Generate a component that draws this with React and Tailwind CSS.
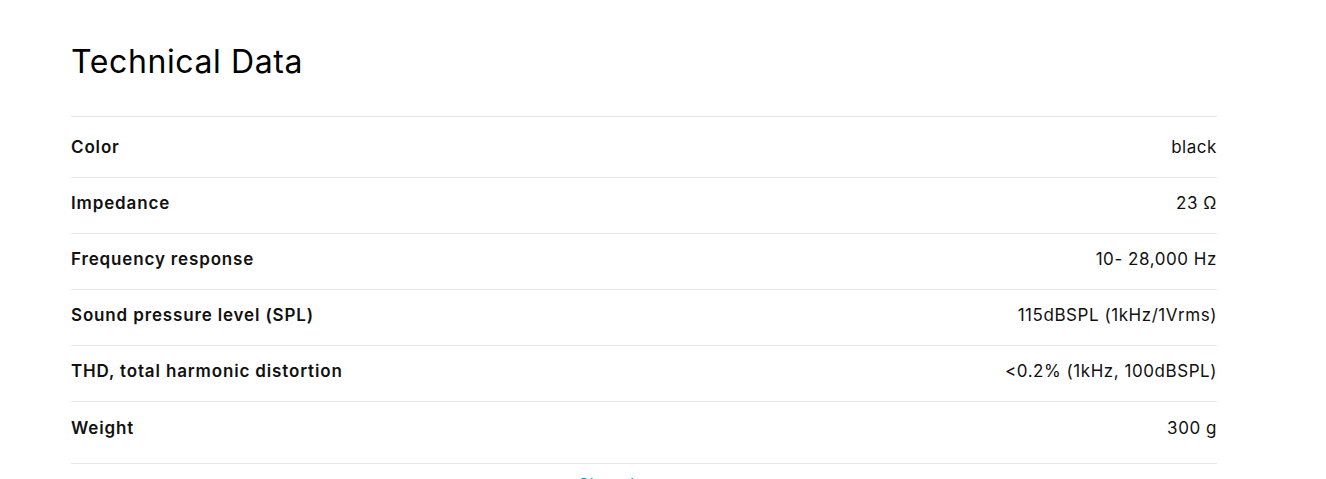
import React from 'react';

const specs = [
  { label: 'Color', value: 'black' },
  { label: 'Impedance', value: '23 Ω' },
  { label: 'Frequency response', value: '10- 28,000 Hz' },
  { label: 'Sound pressure level (SPL)', value: '115dBSPL (1kHz/1Vrms)' },
  { label: 'THD, total harmonic distortion', value: '<0.2% (1kHz, 100dBSPL)' },
  { label: 'Weight', value: '300 g' }
];

const App = () => {
  return (
    <div className="min-h-screen bg-white font-['Inter',sans-serif] text-[#111] overflow-hidden">
      <div className="w-[1146px] ml-[71px] pt-[43px]">
        {/* Heading */}
        <h2 className="text-[32px] leading-[38px] font-normal tracking-[0.6px] text-black">Technical Data</h2>

        {/* Spec table */}
        <div className="mt-[35px] border-t border-b border-[#e6e6e6] py-[5px]">
          {specs.map((row, i) => (
            <div
              key={row.label}
              className={`flex items-center justify-between h-[56px] pb-[3px] text-[17px] ${
                i < specs.length - 1 ? 'border-b border-[#e6e6e6]' : ''
              }`}
            >
              <span className="font-semibold tracking-[0.85px]">{row.label}</span>
              <span className="font-normal tracking-[0.55px]">{row.value}</span>
            </div>
          ))}
        </div>

        {/* Toggle link, cut off by the viewport */}
        <div className="pl-[507px] pt-[9px]">
          <span className="text-[17px] leading-[24px] tracking-[0.5px] text-[#0a9fc6]">Show less</span>
        </div>
      </div>
    </div>
  );
};

export default App;
